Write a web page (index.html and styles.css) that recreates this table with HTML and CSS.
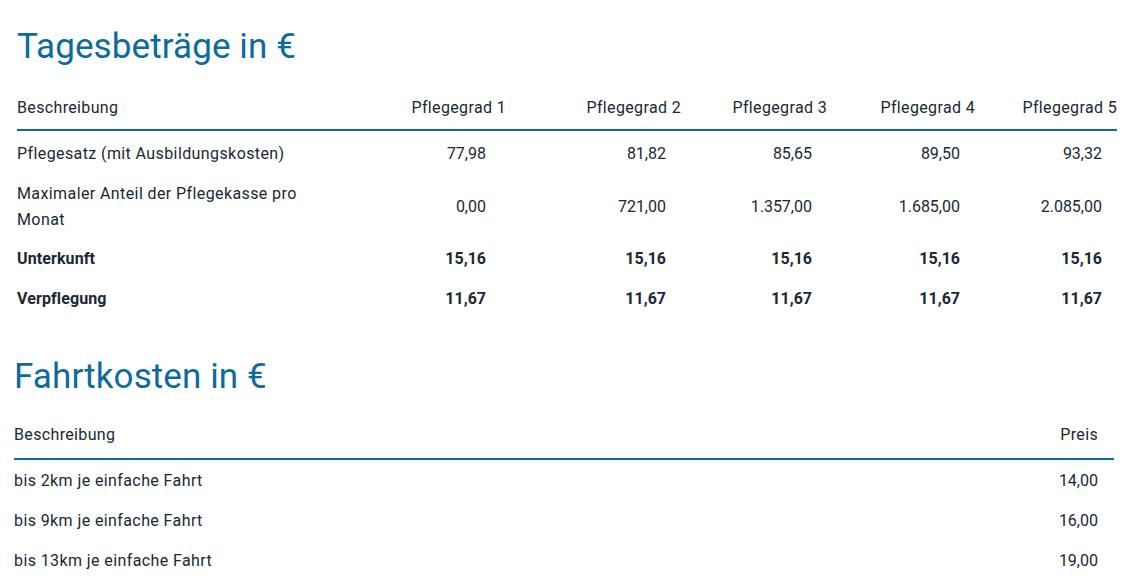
FILE: index.html
```html
<!DOCTYPE html>
<html lang="de">
<head>
<meta charset="utf-8">
<title>Tagesbeträge</title>
<link rel="stylesheet" href="styles.css">
</head>
<body>
<section class="block block-daily">
  <h2 class="title">Tagesbeträge in €</h2>
  <table class="price-table daily">
    <colgroup>
      <col class="c-desc">
      <col class="c-g1">
      <col class="c-g2">
      <col class="c-g3">
      <col class="c-g4">
      <col class="c-g5">
    </colgroup>
    <thead>
      <tr>
        <th class="desc">Beschreibung</th>
        <th class="num">Pflegegrad 1</th>
        <th class="num">Pflegegrad 2</th>
        <th class="num">Pflegegrad 3</th>
        <th class="num">Pflegegrad 4</th>
        <th class="num">Pflegegrad 5</th>
      </tr>
    </thead>
    <tbody>
      <tr>
        <td class="desc">Pflegesatz (mit Ausbildungskosten)</td>
        <td class="num first">77,98</td>
        <td class="num">81,82</td>
        <td class="num">85,65</td>
        <td class="num">89,50</td>
        <td class="num">93,32</td>
      </tr>
      <tr class="tall">
        <td class="desc">Maximaler Anteil der Pflegekasse pro<br>Monat</td>
        <td class="num first">0,00</td>
        <td class="num">721,00</td>
        <td class="num">1.357,00</td>
        <td class="num">1.685,00</td>
        <td class="num">2.085,00</td>
      </tr>
      <tr class="strong">
        <td class="desc">Unterkunft</td>
        <td class="num first">15,16</td>
        <td class="num">15,16</td>
        <td class="num">15,16</td>
        <td class="num">15,16</td>
        <td class="num">15,16</td>
      </tr>
      <tr class="strong">
        <td class="desc">Verpflegung</td>
        <td class="num first">11,67</td>
        <td class="num">11,67</td>
        <td class="num">11,67</td>
        <td class="num">11,67</td>
        <td class="num">11,67</td>
      </tr>
    </tbody>
  </table>
</section>

<section class="block block-travel">
  <h2 class="title">Fahrtkosten in €</h2>
  <table class="price-table travel">
    <thead>
      <tr>
        <th class="desc">Beschreibung</th>
        <th class="num">Preis</th>
      </tr>
    </thead>
    <tbody>
      <tr><td class="desc">bis 2km je einfache Fahrt</td><td class="num">14,00</td></tr>
      <tr><td class="desc">bis 9km je einfache Fahrt</td><td class="num">16,00</td></tr>
      <tr><td class="desc">bis 13km je einfache Fahrt</td><td class="num">19,00</td></tr>
    </tbody>
  </table>
</section>
</body>
</html>
```
FILE: styles.css
```css
html, body {
  margin: 0;
  padding: 0;
  background: #ffffff;
}

body {
  font-family: Roboto, "Liberation Sans", Arial, sans-serif;
  font-size: 16px;
  color: #1a2834;
}

.block-daily {
  padding: 26px 0 0 17px;
  width: 1100px;
}

.block-travel {
  padding: 40px 0 0 14px;
  width: 1100px;
}

.title {
  margin: 0;
  font-size: 35px;
  line-height: 42px;
  font-weight: 400;
  letter-spacing: 0.1px;
  color: #0b6c9c;
}

.price-table {
  width: 1100px;
  border-collapse: collapse;
  table-layout: fixed;
}

.daily { margin-top: 19px; }
.travel { margin-top: 16px; }

.price-table th {
  font-weight: 400;
  line-height: 26px;
  letter-spacing: 0.35px;
  padding: 8px 0;
  border-bottom: 2px solid #0b6c9c;
}

.travel th { padding: 8px 16px 10px 0; }
.travel th.desc { padding-right: 0; }

.price-table td {
  line-height: 26px;
  padding: 10px 15px 4px 0;
  vertical-align: middle;
}

.price-table td.desc {
  letter-spacing: 0.4px;
}

.price-table .desc {
  text-align: left;
  padding-right: 0;
}

.price-table .num { text-align: right; }

.price-table td.first { padding-right: 20px; }

.tall td { padding-bottom: 3px; }

.travel td { padding: 8px 16px 6px 0; }

.strong td { font-weight: 700; }
.strong td.desc { letter-spacing: 0.1px; }

.c-desc { width: 373px; }
.c-g1 { width: 116px; }
.c-g2 { width: 175px; }
.c-g3 { width: 146px; }
.c-g4 { width: 148px; }
.c-g5 { width: 142px; }
```
